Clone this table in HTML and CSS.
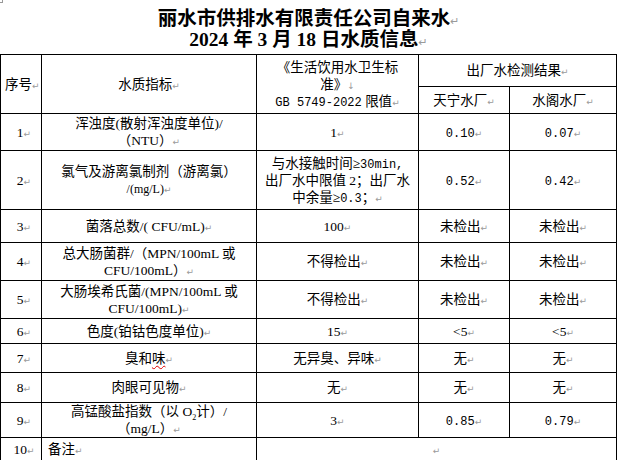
FILE: index.html
```html
<!DOCTYPE html>
<html lang="zh">
<head>
<meta charset="utf-8">
<title>丽水市供排水有限责任公司自来水水质信息</title>
<link rel="stylesheet" href="styles.css">
</head>
<body>
<span class="corner"></span>
<div class="title">
  <div class="tline">丽水市供排水有限责任公司自来水<span class="pm">↵</span></div>
  <div class="tline">2024 年 3 月 18 日水质信息<span class="pm">↵</span></div>
</div>
<table class="report">
  <colgroup>
    <col class="c1"><col class="c2"><col class="c3"><col class="c4"><col class="c5">
  </colgroup>
  <tr class="h1">
    <td rowspan="2">序号<span class="pm">↵</span></td>
    <td rowspan="2">水质指标<span class="pm">↵</span></td>
    <td rowspan="2" class="std">《生活饮用水卫生标<br>准》<span class="pm">↓</span><br><span class="mono">GB 5749-2022</span> 限值<span class="pm">↵</span></td>
    <td colspan="2">出厂水检测结果<span class="pm">↵</span></td>
  </tr>
  <tr class="h2">
    <td>天宁水厂<span class="pm">↵</span></td>
    <td>水阁水厂<span class="pm">↵</span></td>
  </tr>
  <tr class="r1">
    <td class="no">1<span class="pm">↵</span></td>
    <td>浑浊度(散射浑浊度单位)/<br>（NTU）<span class="pm">↵</span></td>
    <td>1<span class="pm">↵</span></td>
    <td><span class="mono">0.10</span><span class="pm">↵</span></td>
    <td><span class="mono">0.07</span><span class="pm">↵</span></td>
  </tr>
  <tr class="r2">
    <td class="no">2<span class="pm">↵</span></td>
    <td>氯气及游离氯制剂（游离氯）<br><span class="small">/(mg/L)</span><span class="pm">↵</span></td>
    <td>与水接触时间≥<span class="mono">30min,</span><br>出厂水中限值 2；出厂水<br>中余量≥<span class="mono">0.3</span>；<span class="pm">↵</span></td>
    <td><span class="mono">0.52</span><span class="pm">↵</span></td>
    <td><span class="mono">0.42</span><span class="pm">↵</span></td>
  </tr>
  <tr class="r3">
    <td class="no">3<span class="pm">↵</span></td>
    <td>菌落总数/( CFU/mL)<span class="pm">↵</span></td>
    <td>100<span class="pm">↵</span></td>
    <td>未检出<span class="pm">↵</span></td>
    <td>未检出<span class="pm">↵</span></td>
  </tr>
  <tr class="r4">
    <td class="no">4<span class="pm">↵</span></td>
    <td>总大肠菌群/（MPN/100mL 或<br>CFU/100mL）<span class="pm">↵</span></td>
    <td>不得检出<span class="pm">↵</span></td>
    <td>未检出<span class="pm">↵</span></td>
    <td>未检出<span class="pm">↵</span></td>
  </tr>
  <tr class="r5">
    <td class="no">5<span class="pm">↵</span></td>
    <td>大肠埃希氏菌/(MPN/100mL 或<br>CFU/100mL)<span class="pm">↵</span></td>
    <td>不得检出<span class="pm">↵</span></td>
    <td>未检出<span class="pm">↵</span></td>
    <td>未检出<span class="pm">↵</span></td>
  </tr>
  <tr class="r6">
    <td class="no">6<span class="pm">↵</span></td>
    <td>色度(铂钴色度单位)<span class="pm">↵</span></td>
    <td>15<span class="pm">↵</span></td>
    <td>&lt;5<span class="pm">↵</span></td>
    <td>&lt;5<span class="pm">↵</span></td>
  </tr>
  <tr class="r7">
    <td class="no">7<span class="pm">↵</span></td>
    <td>臭和<span class="spell">味</span><span class="pm">↵</span></td>
    <td>无异臭、异味<span class="pm">↵</span></td>
    <td>无<span class="pm">↵</span></td>
    <td>无<span class="pm">↵</span></td>
  </tr>
  <tr class="r8">
    <td class="no">8<span class="pm">↵</span></td>
    <td>肉眼可见物<span class="pm">↵</span></td>
    <td>无<span class="pm">↵</span></td>
    <td>无<span class="pm">↵</span></td>
    <td>无<span class="pm">↵</span></td>
  </tr>
  <tr class="r9">
    <td class="no">9<span class="pm">↵</span></td>
    <td>高锰酸盐指数（以 O<sub>2</sub>计）/<br>（mg/L）<span class="pm">↵</span></td>
    <td>3<span class="pm">↵</span></td>
    <td><span class="mono">0.85</span><span class="pm">↵</span></td>
    <td><span class="mono">0.79</span><span class="pm">↵</span></td>
  </tr>
  <tr class="r10">
    <td class="no">10<span class="pm">↵</span></td>
    <td class="left">备注<span class="pm">↵</span></td>
    <td colspan="3"><span class="pm">↵</span></td>
  </tr>
</table>
</body>
</html>
```

FILE: styles.css
```css
html, body {
  margin: 0;
  padding: 0;
  background: #fff;
  overflow: hidden;
}
body {
  position: relative;
  width: 619px;
  height: 460px;
  font-family: "Liberation Serif", "Noto Sans CJK SC", serif;
  color: #000;
}
.corner {
  position: absolute;
  left: 0;
  top: 0;
  width: 2px;
  height: 2px;
  border-right: 1px solid #999;
  border-bottom: 1px solid #999;
}
.title {
  width: 617px;
  height: 54px;
  box-sizing: border-box;
  padding-top: 8px;
  text-align: center;
  font-weight: bold;
  font-size: 19.5px;
}
.tline {
  height: 21px;
  line-height: 21px;
  overflow: visible;
}
.title .pm {
  font-weight: normal;
  font-size: 11px;
}
.pm {
  color: #9a9a9a;
  font-family: "DejaVu Sans", sans-serif;
  font-size: 9px;
  font-weight: normal;
  line-height: 1;
}
.report {
  border-collapse: collapse;
  table-layout: fixed;
  width: 617px;
  font-size: 13.5px;
  line-height: 17px;
}
.report td {
  border: 1px solid #000;
  padding: 0 4px;
  text-align: center;
  vertical-align: middle;
  white-space: nowrap;
  overflow: hidden;
}
.c1 { width: 41px; }
.c2 { width: 215px; }
.c3 { width: 162px; }
.c4 { width: 91px; }
.c5 { width: 107px; }
.report td.no { padding: 0 0 0 6px; }
.report td.left { text-align: left; padding-left: 6px; }
.mono { font-family: "Liberation Mono", monospace; font-size: 12px; line-height: 1; }
.small { font-size: 12px; line-height: 1; }
.spell {
  text-decoration: underline wavy #e00000;
  text-underline-offset: 2px;
  text-decoration-thickness: 1px;
}
sub { font-size: 8px; line-height: 0; }
.h1 td { height: 31px; }
.h2 td { height: 26px; }
.r1 td { height: 36px; }
.r2 td { height: 58px; }
.r3 td { height: 32px; }
.r4 td { height: 37px; }
.r5 td { height: 37px; }
.r6 td { height: 24px; }
.r7 td { height: 28px; }
.r8 td { height: 29px; }
.r9 td { height: 34px; }
.r10 td { height: 22px; }
```
